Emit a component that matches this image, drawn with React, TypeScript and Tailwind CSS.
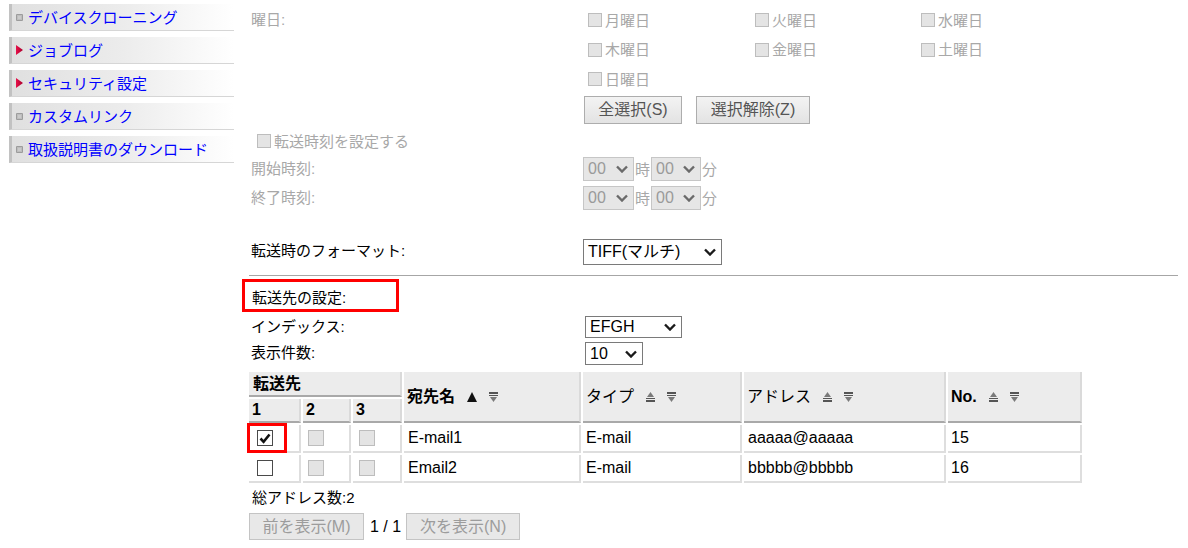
import clsx from "clsx";

const menu = [
	{ label: "デバイスクローニング", arrow: false },
	{ label: "ジョブログ", arrow: true },
	{ label: "セキュリティ設定", arrow: true },
	{ label: "カスタムリンク", arrow: false },
	{ label: "取扱説明書のダウンロード", arrow: false },
];

const days = ["月曜日", "火曜日", "水曜日", "木曜日", "金曜日", "土曜日", "日曜日"];

function Chevron({ dark }: { dark?: boolean }) {
	return (
		<svg width="12" height="8" viewBox="0 0 12 8" className="shrink-0">
			<polyline
				points="1,1.5 6,6.5 11,1.5"
				fill="none"
				stroke={dark ? "#1a1a1a" : "#6a6a6a"}
				strokeWidth="2.4"
			/>
		</svg>
	);
}

function Select({
	value,
	className,
	disabled,
}: {
	value: string;
	className: string;
	disabled?: boolean;
}) {
	return (
		<div
			className={clsx(
				"flex items-center justify-between border pl-[4px] pr-[5px] text-[16px] leading-none",
				disabled
					? "bg-[#e6e6e6] border-[#c6c6c6] text-[#9a9a9a]"
					: "bg-white border-[#7a7a7a] text-black",
				className,
			)}
		>
			<span>{value}</span>
			<Chevron dark={!disabled} />
		</div>
	);
}

function GrayBox({ big }: { big?: boolean }) {
	return (
		<span
			className={clsx(
				"block border border-[#bdbdbd] bg-[#e4e4e4] shrink-0",
				big ? "w-[16px] h-[16px]" : "w-[14px] h-[14px]",
			)}
		/>
	);
}

function SortUp({ active }: { active?: boolean }) {
	if (active) {
		return (
			<svg width="10" height="10" viewBox="0 0 10 10">
				<polygon points="5,0 10,10 0,10" fill="#111" />
			</svg>
		);
	}
	return (
		<svg width="9" height="10" viewBox="0 0 9 10">
			<polygon points="4.5,0 8,5 1,5" fill="#7a7a7a" />
			<rect x="0" y="6" width="9" height="1" fill="#555" />
			<rect x="0" y="8" width="9" height="2" fill="#555" />
		</svg>
	);
}

function SortDown() {
	return (
		<svg width="9" height="10" viewBox="0 0 9 10">
			<rect x="0" y="0" width="9" height="2" fill="#555" />
			<rect x="0" y="3" width="9" height="1" fill="#555" />
			<polygon points="1,5 8,5 4.5,10" fill="#7a7a7a" />
		</svg>
	);
}

function HeadLabel({ text, bold, active }: { text: string; bold?: boolean; active?: boolean }) {
	return (
		<div className="flex items-center pl-[3px]">
			<span className={clsx("text-[16px]", bold ? "font-bold" : "font-normal")}>{text}</span>
			<span className="ml-[12px] flex items-center">
				<SortUp active={active} />
			</span>
			<span className="ml-[12px] flex items-center">
				<SortDown />
			</span>
		</div>
	);
}

export default function App() {
	return (
		<div className="flex w-[1188px] h-[548px] overflow-hidden bg-white font-['Liberation_Sans','Noto_Sans_CJK_JP',sans-serif] text-black">
			{/* Side menu */}
			<aside className="w-[234px] shrink-0 pl-[9px] pt-[4px] flex flex-col gap-[6px]">
				{menu.map((m, i) => (
					<div
						key={m.label}
						className="h-[27px] flex items-center border-l-[3px] border-l-[#c2c2c2] border-b border-b-[#d6d6d6] bg-linear-to-r from-[#e0e0e0] via-[#ececec] to-white pl-[4px]"
					>
						{m.arrow ? (
							<svg width="7" height="10" viewBox="0 0 7 10" className="shrink-0 mr-[5px]">
								<defs>
									<linearGradient id={`arrow${i}`} x1="0" x2="1" y1="0" y2="0">
										<stop offset="0" stopColor="#e8104a" />
										<stop offset="1" stopColor="#a8002c" />
									</linearGradient>
								</defs>
								<polygon points="0,0 7,5 0,10" fill={`url(#arrow${i})`} />
							</svg>
						) : (
							<svg width="7" height="7" viewBox="0 0 7 7" className="shrink-0 mr-[5px]">
								<rect x="0" y="0" width="7" height="7" rx="1" fill="#9c9c9c" />
								<rect x="1" y="1" width="5" height="5" fill="#bdbdbd" />
								<rect x="2" y="2" width="3" height="3" fill="#cacaca" />
							</svg>
						)}
						<span className="text-[15px] leading-none text-[#0000ff] whitespace-nowrap">{m.label}</span>
					</div>
				))}
			</aside>

			{/* Main settings */}
			<main className="ml-[15px] w-[929px] pt-[5px] flex flex-col text-[15px]">
				<div className="flex">
					<div className="w-[335px] h-[30px] pl-[2px] flex items-center text-[#a8a8a8]">曜日:</div>
					<div className="flex flex-col">
						<div className="grid grid-cols-[167px_166px_120px] grid-rows-[30px_29px_30px] ml-[4px]">
							{days.map((d) => (
								<div key={d} className="flex items-center gap-[3px] text-[#a8a8a8]">
									<GrayBox />
									<span className="leading-none">{d}</span>
								</div>
							))}
						</div>
						<div className="flex gap-[14px] mt-[2px]">
							<button className="h-[28px] w-[98px] border border-[#adadad] bg-linear-to-b from-[#f3f3f3] to-[#e3e3e3] text-[#555] text-[16px] leading-none">
								全選択(S)
							</button>
							<button className="h-[28px] w-[114px] border border-[#adadad] bg-linear-to-b from-[#f3f3f3] to-[#e3e3e3] text-[#555] text-[16px] leading-none">
								選択解除(Z)
							</button>
						</div>
					</div>
				</div>

				<div className="h-[28px] mt-[3px] pl-[8px] flex items-center gap-[3px] text-[#a8a8a8]">
					<GrayBox />
					<span className="leading-none">転送時刻を設定する</span>
				</div>

				{["開始時刻:", "終了時刻:"].map((label, i) => (
					<div key={label} className={clsx("flex h-[28px] items-center", i === 1 && "mt-[1px]")}>
						<div className="w-[334px] pl-[2px] text-[#a8a8a8]">{label}</div>
						<div className="flex items-center text-[#a8a8a8]">
							<Select value="00" disabled className="w-[51px] h-[24px]" />
							<span className="mx-[1px] leading-none">時</span>
							<Select value="00" disabled className="w-[50px] h-[24px]" />
							<span className="ml-[1px] leading-none">分</span>
						</div>
					</div>
				))}

				<div className="flex h-[27px] mt-[26px] items-center">
					<div className="w-[334px] pl-[2px]">転送時のフォーマット:</div>
					<Select value="TIFF(マルチ)" className="w-[139px] h-[26px] pr-[2px]" />
				</div>

				<div className="mt-[10px] border-t border-[#a6a6a6]" />

				<div className="flex h-[26px] mt-[9px] items-center">
					<div className="relative pl-[3px]">
						転送先の設定:
						<span className="absolute -left-[7px] -top-[8px] w-[157px] h-[33px] border-[3px] border-[#ff0000]" />
					</div>
				</div>

				<div className="flex h-[26px] mt-[3px] items-center">
					<div className="w-[336px] pl-[2px]">インデックス:</div>
					<Select value="EFGH" className="w-[97px] h-[22px] pr-[2px]" />
				</div>

				<div className="flex h-[27px] items-center">
					<div className="w-[336px] pl-[2px]">表示件数:</div>
					<Select value="10" className="w-[58px] h-[23px] pr-[2px]" />
				</div>

				<table className="mt-[3px] -ml-[2px] w-[837px] table-fixed border-separate border-spacing-[2px] text-[16px]">
					<colgroup>
						<col className="w-[52px]" />
						<col className="w-[48px]" />
						<col className="w-[49px]" />
						<col className="w-[177px]" />
						<col className="w-[159px]" />
						<col className="w-[202px]" />
						<col className="w-[134px]" />
					</colgroup>
					<thead>
						<tr className="h-[25px]">
							<th colSpan={3} className="bg-[#ececec] border-b-2 border-b-[#a9a9a9] border-r-2 border-r-[#dadada] text-left pl-[4px] font-bold leading-none">
								転送先
							</th>
							<th rowSpan={2} className="bg-[#ececec] border-b-2 border-b-[#a9a9a9] border-r-2 border-r-[#dadada] text-left">
								<HeadLabel text="宛先名" bold active />
							</th>
							<th rowSpan={2} className="bg-[#ececec] border-b-2 border-b-[#a9a9a9] border-r-2 border-r-[#dadada] text-left">
								<HeadLabel text="タイプ" />
							</th>
							<th rowSpan={2} className="bg-[#ececec] border-b-2 border-b-[#a9a9a9] border-r-2 border-r-[#dadada] text-left">
								<HeadLabel text="アドレス" />
							</th>
							<th rowSpan={2} className="bg-[#ececec] border-b-2 border-b-[#a9a9a9] border-r-2 border-r-[#dadada] text-left">
								<HeadLabel text="No." bold />
							</th>
						</tr>
						<tr className="h-[24px]">
							{["1", "2", "3"].map((n) => (
								<th key={n} className="bg-[#ececec] border-b-2 border-b-[#a9a9a9] border-r-2 border-r-[#dadada] text-left pl-[3px] font-bold leading-none">
									{n}
								</th>
							))}
						</tr>
					</thead>
					<tbody>
						{[
							{ checked: true, name: "E-mail1", type: "E-mail", addr: "aaaaa@aaaaa", no: "15" },
							{ checked: false, name: "Email2", type: "E-mail", addr: "bbbbb@bbbbb", no: "16" },
						].map((r) => (
							<tr key={r.name} className="h-[28px]">
								<td className="border-b-2 border-r-2 border-[#dedede] pl-[8px]">
									<div className="relative w-[16px] h-[16px]">
										<span className="flex items-center justify-center w-[16px] h-[16px] border border-[#4a4a4a] bg-white">
											{r.checked && (
												<svg width="12" height="11" viewBox="0 0 12 11">
													<polyline points="1.5,5.5 4.6,8.8 10.5,1.5" fill="none" stroke="#111" strokeWidth="2.6" />
												</svg>
											)}
										</span>
										{r.checked && (
											<span className="absolute -left-[10px] -top-[7px] w-[40px] h-[30px] border-[3px] border-[#ff0000]" />
										)}
									</div>
								</td>
								<td className="border-b-2 border-r-2 border-[#dedede] pl-[5px]">
									<GrayBox big />
								</td>
								<td className="border-b-2 border-r-2 border-[#dedede] pl-[6px]">
									<GrayBox big />
								</td>
								<td className="border-b-2 border-r-2 border-[#dedede] pl-[4px] leading-none">{r.name}</td>
								<td className="border-b-2 border-r-2 border-[#dedede] pl-[3px] leading-none">{r.type}</td>
								<td className="border-b-2 border-r-2 border-[#dedede] pl-[4px] leading-none">{r.addr}</td>
								<td className="border-b-2 border-r-2 border-[#dedede] pl-[3px] leading-none">{r.no}</td>
							</tr>
						))}
					</tbody>
				</table>

				<div className="h-[26px] pl-[3px] flex items-center">総アドレス数:2</div>

				<div className="flex items-center h-[27px] mt-[2px]">
					<button className="h-[27px] w-[115px] border border-[#c4c4c4] bg-[#e8e8e8] text-[#9c9c9c] text-[16px] leading-none">
						前を表示(M)
					</button>
					<span className="ml-[6px] mr-[5px] text-[16px] leading-none">1 / 1</span>
					<button className="h-[27px] w-[114px] border border-[#c4c4c4] bg-[#e8e8e8] text-[#9c9c9c] text-[16px] leading-none">
						次を表示(N)
					</button>
				</div>
			</main>
		</div>
	);
}
